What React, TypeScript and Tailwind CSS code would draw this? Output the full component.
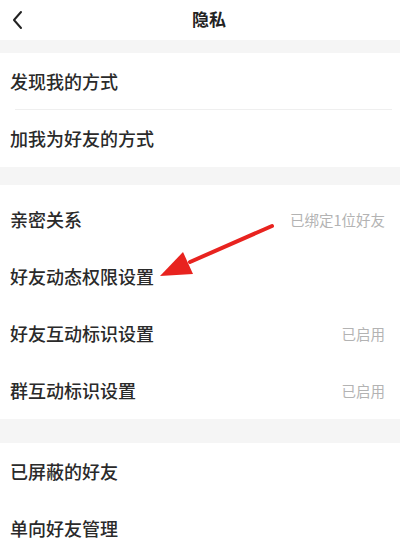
import React from "react";

const font = { fontFamily: '"Noto Sans CJK SC", "Noto Sans", sans-serif' };

function Row({ label, value, divider }: { label: string; value?: string; divider?: boolean }) {
  return (
    <div className="relative flex h-[57px] items-center justify-between pl-[10px] pr-[15px]">
      <span className="text-[18px] font-medium text-[#2a2a2a]">{label}</span>
      {value && <span className="text-[14.5px] text-[#b3b3b3]">{value}</span>}
      {divider && <div className="absolute bottom-0 left-[15px] right-[8px] h-px bg-[#efefef]" />}
    </div>
  );
}

export default function App() {
  return (
    <div className="relative flex h-[560px] w-[400px] flex-col overflow-hidden bg-[#f5f5f5]" style={font}>
      <div className="relative flex h-[40px] shrink-0 items-center bg-white">
        <svg className="ml-[11px]" width="14" height="20" viewBox="0 0 14 20">
          <path d="M10 2 L3 10 L10 18" fill="none" stroke="#222" strokeWidth="2" strokeLinecap="round" strokeLinejoin="round" />
        </svg>
        <span className="absolute left-[192px] top-[6px] text-[17px] font-bold text-[#222]">隐私</span>
      </div>
      <div className="mt-[13px] shrink-0 bg-white">
        <Row label="发现我的方式" divider />
        <Row label="加我为好友的方式" />
      </div>
      <div className="mt-[18px] shrink-0 bg-white pt-[6px]">
        <Row label="亲密关系" value="已绑定1位好友" />
        <Row label="好友动态权限设置" />
        <Row label="好友互动标识设置" value="已启用" />
        <Row label="群互动标识设置" value="已启用" />
      </div>
      <div className="mt-[24px] flex-1 bg-white">
        <Row label="已屏蔽的好友" />
        <Row label="单向好友管理" />
      </div>
      <svg className="absolute left-0 top-0" width="400" height="560" viewBox="0 0 400 560">
        <path d="M272 226 L190 262" stroke="#e8231f" strokeWidth="4" strokeLinecap="round" />
        <polygon points="160,276 183,252 193,274" fill="#e8231f" />
      </svg>
    </div>
  );
}
